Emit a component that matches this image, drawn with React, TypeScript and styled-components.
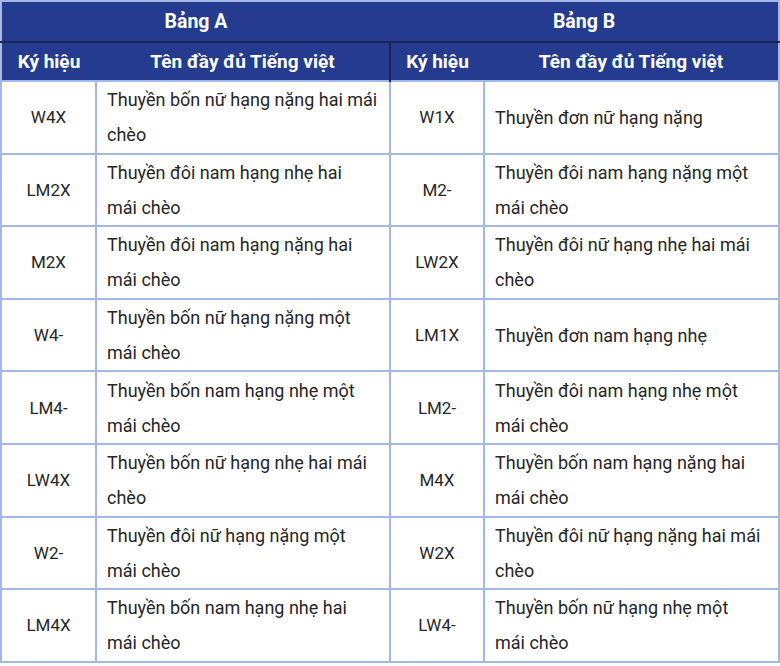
import React from 'react'
import styled, { createGlobalStyle } from 'styled-components'

const GlobalStyle = createGlobalStyle`
  html, body {
    margin: 0;
    padding: 0;
    background: #ffffff;
  }
  body {
    font-family: Roboto, "Noto Sans", "Liberation Sans", sans-serif;
  }
`

const Page = styled.div`
  width: 780px;
  height: 666px;
  padding: 0 2px 0 0;
  box-sizing: border-box;
  overflow: hidden;
`

const Table = styled.table`
  width: 778px;
  table-layout: fixed;
  border-collapse: collapse;
  border: 2px solid #a3b8e6;
`

const Col = styled.col<{ $w: number }>`
  width: ${(p) => p.$w}px;
`

const TitleRow = styled.tr`
  height: 41px;
  background: #243b8f;
  border-bottom: 2px solid #1b2556;
`

const TitleCell = styled.th`
  color: #ffffff;
  font-size: 19.5px;
  font-weight: 700;
  text-align: center;
  padding: 0;
`

const HeadRow = styled.tr`
  height: 39px;
  background: #243b8f;
`

const HeadCell = styled.th<{ $split?: boolean }>`
  color: #ffffff;
  font-size: 19px;
  font-weight: 700;
  text-align: center;
  padding: 0;
  border-left: ${(p) => (p.$split ? '2px solid #1b2556' : 'none')};
`

const BodyRow = styled.tr`
  height: 72.6px;
`

const CodeCell = styled.td`
  border: 2px solid #a3b8e6;
  text-align: center;
  vertical-align: middle;
  font-size: 17px;
  color: #262626;
  padding: 0;
`

const NameCell = styled.td`
  border: 2px solid #a3b8e6;
  text-align: left;
  vertical-align: middle;
  font-size: 18px;
  line-height: 35px;
  color: #262626;
  padding: 0 6px 0 10px;
  white-space: nowrap;
  overflow: hidden;
`

const Line = styled.span`
  display: block;
`

type Boat = { code: string; name: string[] }

const tableA: Boat[] = [
  { code: 'W4X', name: ['Thuyền bốn nữ hạng nặng hai mái', 'chèo'] },
  { code: 'LM2X', name: ['Thuyền đôi nam hạng nhẹ hai', 'mái chèo'] },
  { code: 'M2X', name: ['Thuyền đôi nam hạng nặng hai', 'mái chèo'] },
  { code: 'W4-', name: ['Thuyền bốn nữ hạng nặng một', 'mái chèo'] },
  { code: 'LM4-', name: ['Thuyền bốn nam hạng nhẹ một', 'mái chèo'] },
  { code: 'LW4X', name: ['Thuyền bốn nữ hạng nhẹ hai mái', 'chèo'] },
  { code: 'W2-', name: ['Thuyền đôi nữ hạng nặng một', 'mái chèo'] },
  { code: 'LM4X', name: ['Thuyền bốn nam hạng nhẹ hai', 'mái chèo'] },
]

const tableB: Boat[] = [
  { code: 'W1X', name: ['Thuyền đơn nữ hạng nặng'] },
  { code: 'M2-', name: ['Thuyền đôi nam hạng nặng một', 'mái chèo'] },
  { code: 'LW2X', name: ['Thuyền đôi nữ hạng nhẹ hai mái', 'chèo'] },
  { code: 'LM1X', name: ['Thuyền đơn nam hạng nhẹ'] },
  { code: 'LM2-', name: ['Thuyền đôi nam hạng nhẹ một', 'mái chèo'] },
  { code: 'M4X', name: ['Thuyền bốn nam hạng nặng hai', 'mái chèo'] },
  { code: 'W2X', name: ['Thuyền đôi nữ hạng nặng hai mái', 'chèo'] },
  { code: 'LW4-', name: ['Thuyền bốn nữ hạng nhẹ một', 'mái chèo'] },
]

function Name({ lines }: { lines: string[] }) {
  return (
    <NameCell>
      {lines.map((l) => (
        <Line key={l}>{l}</Line>
      ))}
    </NameCell>
  )
}

export default function App() {
  return (
    <Page>
      <GlobalStyle />
      <Table>
        <colgroup>
          <Col $w={95} />
          <Col $w={294} />
          <Col $w={94} />
          <Col $w={295} />
        </colgroup>
        <thead>
          <TitleRow>
            <TitleCell colSpan={2}>Bảng A</TitleCell>
            <TitleCell colSpan={2}>Bảng B</TitleCell>
          </TitleRow>
          <HeadRow>
            <HeadCell>Ký hiệu</HeadCell>
            <HeadCell>Tên đầy đủ Tiếng việt</HeadCell>
            <HeadCell $split>Ký hiệu</HeadCell>
            <HeadCell>Tên đầy đủ Tiếng việt</HeadCell>
          </HeadRow>
        </thead>
        <tbody>
          {tableA.map((a, i) => {
            const b = tableB[i]
            return (
              <BodyRow key={a.code}>
                <CodeCell>{a.code}</CodeCell>
                <Name lines={a.name} />
                <CodeCell>{b.code}</CodeCell>
                <Name lines={b.name} />
              </BodyRow>
            )
          })}
        </tbody>
      </Table>
    </Page>
  )
}
